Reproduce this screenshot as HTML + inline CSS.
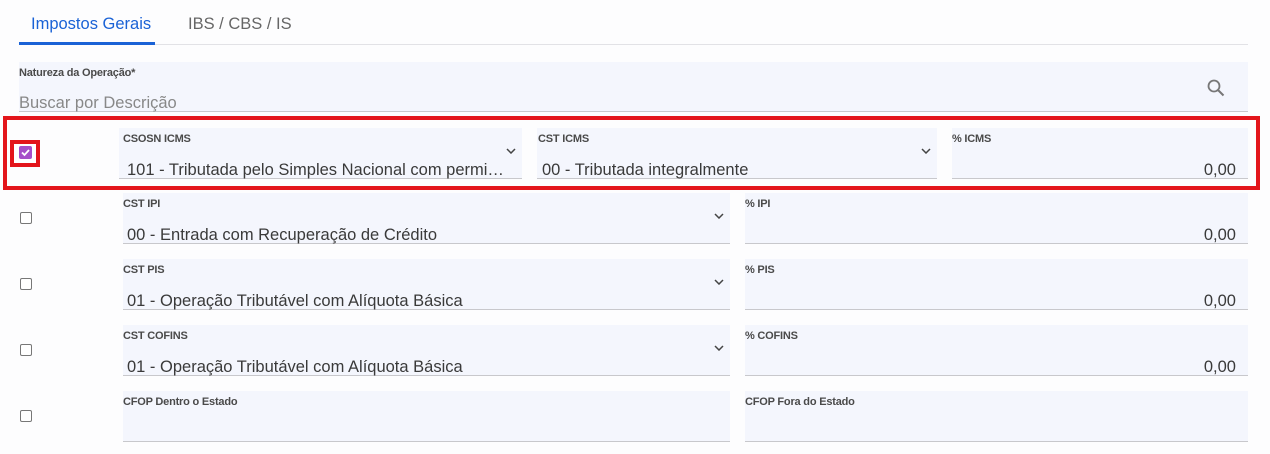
<!DOCTYPE html>
<html><head><meta charset="utf-8"><style>
*{margin:0;padding:0;box-sizing:border-box}
body{width:1270px;height:454px;background:#fdfdfe;font-family:"Liberation Sans",sans-serif;position:relative;overflow:hidden;color:#333}
.a{position:absolute}
.f{position:absolute;background:#f4f6fd;border-bottom:1px solid #c8c8cc}
.f .l{position:absolute;left:0;top:5px;font-size:11px;font-weight:bold;color:#4a4a4a;letter-spacing:-0.2px}
.f .v{position:absolute;left:4px;bottom:-2px;font-size:16.5px;line-height:20px;color:#3a3a3a;white-space:nowrap}
.f .r{position:absolute;right:12px;bottom:-2px;font-size:16.5px;line-height:20px;color:#3a3a3a}
.f svg.c{position:absolute;right:6px;top:20px}
.cb{position:absolute;left:20px;width:12px;height:12px;border:1.5px solid #777;border-radius:2px;background:#fff}
</style></head><body>
<div class="a" style="left:31px;top:15px;font-size:16.5px;color:#1a62d6">Impostos Gerais</div>
<div class="a" style="left:188px;top:15px;font-size:16.5px;color:#666">IBS / CBS / IS</div>
<div class="a" style="left:19px;top:44px;width:1229px;height:1px;background:#e2e2e6"></div>
<div class="a" style="left:19px;top:42px;width:136px;height:3px;background:#1a62d6"></div>

<div class="f" style="left:19px;top:62px;width:1229px;height:50px"><div class="l">Natureza da Operação*</div><div class="v" style="left:0;color:#888">Buscar por Descrição</div>
<svg class="a" style="right:22px;top:16px" width="20" height="20" viewBox="0 0 20 20"><circle cx="8" cy="8" r="5.5" fill="none" stroke="#777" stroke-width="1.8"/><line x1="12" y1="12" x2="17.5" y2="17.5" stroke="#777" stroke-width="2"/></svg></div>

<div class="a" style="left:3px;top:116px;width:1257px;height:74px;border:4px solid #e3151b"></div>
<div class="a" style="left:10px;top:140px;width:30px;height:27px;border:4px solid #e3151b;background:#fff"></div>
<div class="a" style="left:19px;top:146px;width:13px;height:13px;background:#a54fc9;border-radius:2px"><svg width="13" height="13"><path d="M3 6.5l2.5 2.5 4.5-5" fill="none" stroke="#fff" stroke-width="1.8"/></svg></div>

<div class="f" style="left:119px;top:128px;width:403px;height:51px"><div class="l" style="left:4px">CSOSN ICMS</div><div class="v" style="left:8px">101 - Tributada pelo Simples Nacional com permi…</div><svg class="c" width="10" height="6"><path d="M1 1l4 4 4-4" fill="none" stroke="#444" stroke-width="1.5"/></svg></div>
<div class="f" style="left:537px;top:128px;width:400px;height:51px"><div class="l" style="left:1px">CST ICMS</div><div class="v" style="left:5px">00 - Tributada integralmente</div><svg class="c" width="10" height="6"><path d="M1 1l4 4 4-4" fill="none" stroke="#444" stroke-width="1.5"/></svg></div>
<div class="f" style="left:952px;top:128px;width:296px;height:51px"><div class="l">% ICMS</div><div class="r">0,00</div></div>

<div class="cb" style="top:212px"></div>
<div class="f" style="left:123px;top:193px;width:607px;height:51px"><div class="l">CST IPI</div><div class="v">00 - Entrada com Recuperação de Crédito</div><svg class="c" width="10" height="6"><path d="M1 1l4 4 4-4" fill="none" stroke="#444" stroke-width="1.5"/></svg></div>
<div class="f" style="left:745px;top:193px;width:503px;height:51px"><div class="l">% IPI</div><div class="r">0,00</div></div>

<div class="cb" style="top:278px"></div>
<div class="f" style="left:123px;top:259px;width:607px;height:51px"><div class="l">CST PIS</div><div class="v">01 - Operação Tributável com Alíquota Básica</div><svg class="c" width="10" height="6"><path d="M1 1l4 4 4-4" fill="none" stroke="#444" stroke-width="1.5"/></svg></div>
<div class="f" style="left:745px;top:259px;width:503px;height:51px"><div class="l">% PIS</div><div class="r">0,00</div></div>

<div class="cb" style="top:344px"></div>
<div class="f" style="left:123px;top:325px;width:607px;height:51px"><div class="l">CST COFINS</div><div class="v">01 - Operação Tributável com Alíquota Básica</div><svg class="c" width="10" height="6"><path d="M1 1l4 4 4-4" fill="none" stroke="#444" stroke-width="1.5"/></svg></div>
<div class="f" style="left:745px;top:325px;width:503px;height:51px"><div class="l">% COFINS</div><div class="r">0,00</div></div>

<div class="cb" style="top:410px"></div>
<div class="f" style="left:123px;top:391px;width:607px;height:51px"><div class="l">CFOP Dentro o Estado</div></div>
<div class="f" style="left:745px;top:391px;width:503px;height:51px"><div class="l">CFOP Fora do Estado</div></div>
</body></html>
